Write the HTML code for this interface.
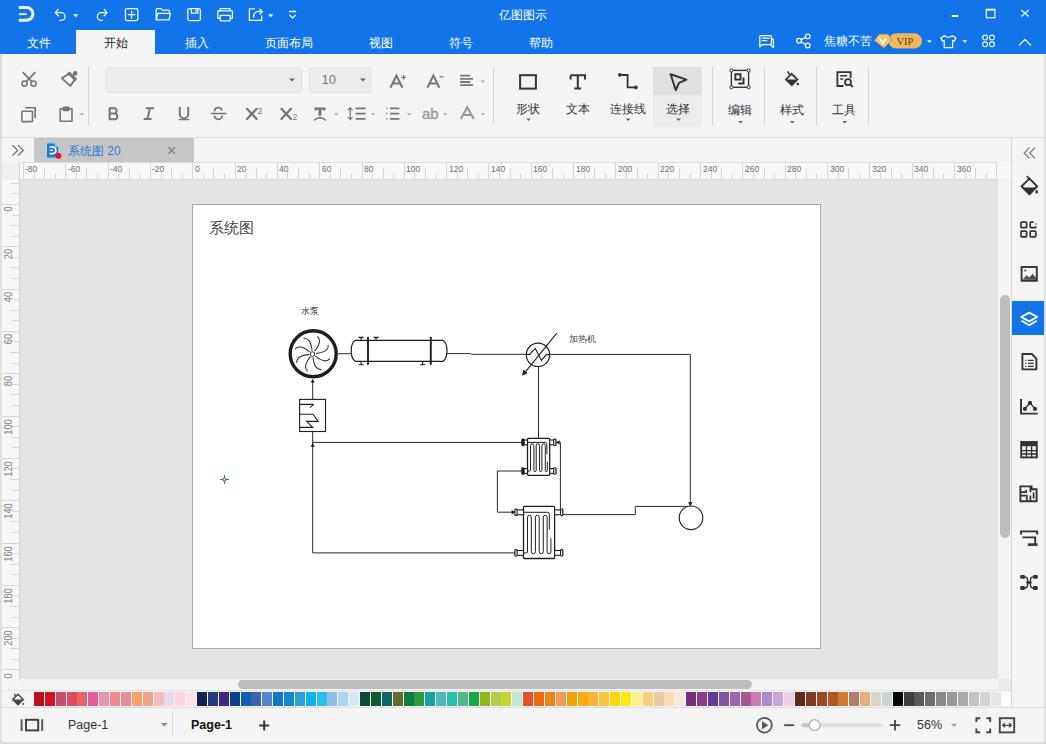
<!DOCTYPE html><html><head><meta charset="utf-8"><style>
*{margin:0;padding:0;box-sizing:border-box}
html,body{width:1046px;height:744px;overflow:hidden;background:#f4f4f4;font-family:"Liberation Sans",sans-serif;position:relative}
.a{position:absolute}
.t{position:absolute;white-space:nowrap;line-height:1;z-index:2}
svg.ov{position:absolute;left:0;top:0;overflow:visible}
</style></head><body>

<div class="a" style="left:0px;top:0px;width:1046px;height:54px;background:#1174e8;"></div>
<div class="a" style="left:76px;top:30px;width:79px;height:24px;background:#f4f4f4;"></div>
<div class="a" style="left:0px;top:54px;width:1046px;height:83px;background:#f4f4f4;"></div>
<div class="a" style="left:0px;top:137px;width:1046px;height:1px;background:#dadada;"></div>
<div class="a" style="left:0px;top:54px;width:2px;height:83px;background:#dedede;"></div>
<div class="a" style="left:0px;top:138px;width:1011px;height:24px;background:#f4f4f4;"></div>
<div class="a" style="left:34px;top:138px;width:160px;height:24px;background:#c6c6c6;"></div>
<div class="a" style="left:20px;top:180px;width:978px;height:499px;background:#e4e4e4;"></div>
<div class="a" style="left:192px;top:204px;width:629px;height:445px;background:#ffffff;border:1px solid #a9a9a9"></div>
<div class="a" style="left:0px;top:162px;width:1011px;height:18px;background:#f8f8f8;"></div>
<div class="a" style="left:0px;top:162px;width:20px;height:517px;background:#f7f7f7;"></div>
<div class="a" style="left:0px;top:162px;width:20px;height:18px;background:#efefef;"></div>
<div class="a" style="left:0px;top:180px;width:2px;height:499px;background:#e6e6e6;"></div>
<div class="a" style="left:20px;top:162px;width:978px;height:1px;background:#dcdcdc;"></div>
<div class="a" style="left:20px;top:179px;width:978px;height:1px;background:#dadada;"></div>
<div class="a" style="left:19px;top:162px;width:1px;height:517px;background:#d4d4d4;"></div>
<div class="a" style="left:998px;top:179px;width:13px;height:512px;background:#f3f3f3;"></div>
<div class="a" style="left:1000px;top:295px;width:10px;height:243px;background:#bdbdbd;border-radius:5px"></div>
<div class="a" style="left:20px;top:679px;width:978px;height:12px;background:#f3f3f3;"></div>
<div class="a" style="left:238px;top:680px;width:514px;height:9px;background:#bdbdbd;border-radius:4.5px"></div>
<div class="a" style="left:998px;top:679px;width:13px;height:12px;background:#ebebeb;"></div>
<div class="a" style="left:1011px;top:138px;width:1px;height:569px;background:#d6d6d6;"></div>
<div class="a" style="left:1012px;top:138px;width:34px;height:569px;background:#f4f4f4;"></div>
<div class="a" style="left:1012px;top:301px;width:32px;height:34px;background:#1174e8;"></div>
<div class="a" style="left:0px;top:691px;width:1011px;height:16px;background:#f4f4f4;"></div>
<div class="a" style="left:34.00px;top:692px;width:10px;height:14px;background:#b5121b"></div>
<div class="a" style="left:44.87px;top:692px;width:10px;height:14px;background:#d7111f"></div>
<div class="a" style="left:55.74px;top:692px;width:10px;height:14px;background:#c94d72"></div>
<div class="a" style="left:66.61px;top:692px;width:10px;height:14px;background:#e04a5f"></div>
<div class="a" style="left:77.48px;top:692px;width:10px;height:14px;background:#e8636a"></div>
<div class="a" style="left:88.35px;top:692px;width:10px;height:14px;background:#e45c9b"></div>
<div class="a" style="left:99.22px;top:692px;width:10px;height:14px;background:#e595b3"></div>
<div class="a" style="left:110.09px;top:692px;width:10px;height:14px;background:#ef8a8a"></div>
<div class="a" style="left:120.96px;top:692px;width:10px;height:14px;background:#e58f9c"></div>
<div class="a" style="left:131.83px;top:692px;width:10px;height:14px;background:#f7a26a"></div>
<div class="a" style="left:142.70px;top:692px;width:10px;height:14px;background:#f0a58a"></div>
<div class="a" style="left:153.57px;top:692px;width:10px;height:14px;background:#f5bcbc"></div>
<div class="a" style="left:164.44px;top:692px;width:10px;height:14px;background:#e7d8ea"></div>
<div class="a" style="left:175.31px;top:692px;width:10px;height:14px;background:#fbd5e2"></div>
<div class="a" style="left:186.18px;top:692px;width:10px;height:14px;background:#fce3e3"></div>
<div class="a" style="left:197.05px;top:692px;width:10px;height:14px;background:#13224e"></div>
<div class="a" style="left:207.92px;top:692px;width:10px;height:14px;background:#243c7a"></div>
<div class="a" style="left:218.79px;top:692px;width:10px;height:14px;background:#3d2a80"></div>
<div class="a" style="left:229.66px;top:692px;width:10px;height:14px;background:#0d3f8f"></div>
<div class="a" style="left:240.53px;top:692px;width:10px;height:14px;background:#0f62a8"></div>
<div class="a" style="left:251.40px;top:692px;width:10px;height:14px;background:#3b63ae"></div>
<div class="a" style="left:262.27px;top:692px;width:10px;height:14px;background:#5483c6"></div>
<div class="a" style="left:273.14px;top:692px;width:10px;height:14px;background:#0f79c8"></div>
<div class="a" style="left:284.01px;top:692px;width:10px;height:14px;background:#1388d0"></div>
<div class="a" style="left:294.88px;top:692px;width:10px;height:14px;background:#2ea1dc"></div>
<div class="a" style="left:305.75px;top:692px;width:10px;height:14px;background:#11b2ea"></div>
<div class="a" style="left:316.62px;top:692px;width:10px;height:14px;background:#2cbdf0"></div>
<div class="a" style="left:327.49px;top:692px;width:10px;height:14px;background:#8ec0e8"></div>
<div class="a" style="left:338.36px;top:692px;width:10px;height:14px;background:#a9d6ef"></div>
<div class="a" style="left:349.23px;top:692px;width:10px;height:14px;background:#d4e9f3"></div>
<div class="a" style="left:360.10px;top:692px;width:10px;height:14px;background:#0c4a35"></div>
<div class="a" style="left:370.97px;top:692px;width:10px;height:14px;background:#0c5c2f"></div>
<div class="a" style="left:381.84px;top:692px;width:10px;height:14px;background:#0f6466"></div>
<div class="a" style="left:392.71px;top:692px;width:10px;height:14px;background:#5f6e2b"></div>
<div class="a" style="left:403.58px;top:692px;width:10px;height:14px;background:#0f7b45"></div>
<div class="a" style="left:414.45px;top:692px;width:10px;height:14px;background:#2a9a3f"></div>
<div class="a" style="left:425.32px;top:692px;width:10px;height:14px;background:#13a59b"></div>
<div class="a" style="left:436.19px;top:692px;width:10px;height:14px;background:#4fb8bb"></div>
<div class="a" style="left:447.06px;top:692px;width:10px;height:14px;background:#26c2ae"></div>
<div class="a" style="left:457.93px;top:692px;width:10px;height:14px;background:#55b586"></div>
<div class="a" style="left:468.80px;top:692px;width:10px;height:14px;background:#14a94a"></div>
<div class="a" style="left:479.67px;top:692px;width:10px;height:14px;background:#8ab919"></div>
<div class="a" style="left:490.54px;top:692px;width:10px;height:14px;background:#b0cc53"></div>
<div class="a" style="left:501.41px;top:692px;width:10px;height:14px;background:#c8d531"></div>
<div class="a" style="left:512.28px;top:692px;width:10px;height:14px;background:#c3e6d4"></div>
<div class="a" style="left:523.15px;top:692px;width:10px;height:14px;background:#e4512a"></div>
<div class="a" style="left:534.02px;top:692px;width:10px;height:14px;background:#ec6b11"></div>
<div class="a" style="left:544.89px;top:692px;width:10px;height:14px;background:#f08413"></div>
<div class="a" style="left:555.76px;top:692px;width:10px;height:14px;background:#f3995a"></div>
<div class="a" style="left:566.63px;top:692px;width:10px;height:14px;background:#f0a30b"></div>
<div class="a" style="left:577.50px;top:692px;width:10px;height:14px;background:#f8ab10"></div>
<div class="a" style="left:588.37px;top:692px;width:10px;height:14px;background:#fbb33a"></div>
<div class="a" style="left:599.24px;top:692px;width:10px;height:14px;background:#fcc43e"></div>
<div class="a" style="left:610.11px;top:692px;width:10px;height:14px;background:#fdd60a"></div>
<div class="a" style="left:620.98px;top:692px;width:10px;height:14px;background:#fde80d"></div>
<div class="a" style="left:631.85px;top:692px;width:10px;height:14px;background:#fcf08a"></div>
<div class="a" style="left:642.72px;top:692px;width:10px;height:14px;background:#f9cf7a"></div>
<div class="a" style="left:653.59px;top:692px;width:10px;height:14px;background:#e8cba0"></div>
<div class="a" style="left:664.46px;top:692px;width:10px;height:14px;background:#fcdcb4"></div>
<div class="a" style="left:675.33px;top:692px;width:10px;height:14px;background:#f7e8da"></div>
<div class="a" style="left:686.20px;top:692px;width:10px;height:14px;background:#7b2e7e"></div>
<div class="a" style="left:697.07px;top:692px;width:10px;height:14px;background:#8b3a8e"></div>
<div class="a" style="left:707.94px;top:692px;width:10px;height:14px;background:#5e3d96"></div>
<div class="a" style="left:718.81px;top:692px;width:10px;height:14px;background:#7b56a8"></div>
<div class="a" style="left:729.68px;top:692px;width:10px;height:14px;background:#9b68ac"></div>
<div class="a" style="left:740.55px;top:692px;width:10px;height:14px;background:#a25a8e"></div>
<div class="a" style="left:751.42px;top:692px;width:10px;height:14px;background:#cf79b0"></div>
<div class="a" style="left:762.29px;top:692px;width:10px;height:14px;background:#a98ccf"></div>
<div class="a" style="left:773.16px;top:692px;width:10px;height:14px;background:#c6a7d6"></div>
<div class="a" style="left:784.03px;top:692px;width:10px;height:14px;background:#efd1e6"></div>
<div class="a" style="left:794.90px;top:692px;width:10px;height:14px;background:#5f2a1a"></div>
<div class="a" style="left:805.77px;top:692px;width:10px;height:14px;background:#7e3a26"></div>
<div class="a" style="left:816.64px;top:692px;width:10px;height:14px;background:#9a4a24"></div>
<div class="a" style="left:827.51px;top:692px;width:10px;height:14px;background:#b05a22"></div>
<div class="a" style="left:838.38px;top:692px;width:10px;height:14px;background:#cd7a34"></div>
<div class="a" style="left:849.25px;top:692px;width:10px;height:14px;background:#b08068"></div>
<div class="a" style="left:860.12px;top:692px;width:10px;height:14px;background:#e5b07a"></div>
<div class="a" style="left:870.99px;top:692px;width:10px;height:14px;background:#d8d3cf"></div>
<div class="a" style="left:881.86px;top:692px;width:10px;height:14px;background:#c9d3cf"></div>
<div class="a" style="left:892.73px;top:692px;width:10px;height:14px;background:#050505"></div>
<div class="a" style="left:903.60px;top:692px;width:10px;height:14px;background:#433d3d"></div>
<div class="a" style="left:914.47px;top:692px;width:10px;height:14px;background:#595959"></div>
<div class="a" style="left:925.34px;top:692px;width:10px;height:14px;background:#6e6e6e"></div>
<div class="a" style="left:936.21px;top:692px;width:10px;height:14px;background:#888888"></div>
<div class="a" style="left:947.08px;top:692px;width:10px;height:14px;background:#999999"></div>
<div class="a" style="left:957.95px;top:692px;width:10px;height:14px;background:#aaaaaa"></div>
<div class="a" style="left:968.82px;top:692px;width:10px;height:14px;background:#c4c4c4"></div>
<div class="a" style="left:979.69px;top:692px;width:10px;height:14px;background:#d4d4d4"></div>
<div class="a" style="left:990.56px;top:692px;width:10px;height:14px;background:#e6e6e6"></div>
<div class="a" style="left:1001.43px;top:692px;width:10px;height:14px;background:#ffffff"></div>
<div class="a" style="left:0px;top:707px;width:1046px;height:1px;background:#dcdcdc;"></div>
<div class="a" style="left:0px;top:708px;width:1046px;height:36px;background:#f4f4f4;"></div>
<div class="a" style="left:172px;top:712px;width:1px;height:24px;background:#d8d8d8;"></div>
<div class="a" style="left:1044px;top:54px;width:2px;height:690px;background:#e0e0e0;"></div>
<div class="a" style="left:0px;top:742px;width:1046px;height:2px;background:#dcdcdc;"></div>
<div class="a" style="left:0px;top:138px;width:2px;height:604px;background:#e2e2e2;"></div>
<div class="a" style="left:0px;top:690px;width:1011px;height:1px;background:#e6e6e6;"></div>
<div class="t" style="left:499px;top:9px;font-size:12px;color:#fff;">亿图图示</div>
<div class="t" style="left:-21.5px;top:36.5px;font-size:12px;color:#fff;width:120px;text-align:center;">文件</div>
<div class="t" style="left:55.5px;top:36.5px;font-size:12px;color:#222;width:120px;text-align:center;">开始</div>
<div class="t" style="left:136.5px;top:36.5px;font-size:12px;color:#fff;width:120px;text-align:center;">插入</div>
<div class="t" style="left:228.5px;top:36.5px;font-size:12px;color:#fff;width:120px;text-align:center;">页面布局</div>
<div class="t" style="left:320.5px;top:36.5px;font-size:12px;color:#fff;width:120px;text-align:center;">视图</div>
<div class="t" style="left:400.5px;top:36.5px;font-size:12px;color:#fff;width:120px;text-align:center;">符号</div>
<div class="t" style="left:480.5px;top:36.5px;font-size:12px;color:#fff;width:120px;text-align:center;">帮助</div>
<div class="t" style="left:824px;top:35px;font-size:12px;color:#fff;">焦糖不苦</div>
<div class="t" style="left:488px;top:103px;font-size:12px;color:#333;width:80px;text-align:center;">形状</div>
<div class="t" style="left:538px;top:103px;font-size:12px;color:#333;width:80px;text-align:center;">文本</div>
<div class="t" style="left:588px;top:103px;font-size:12px;color:#333;width:80px;text-align:center;">连接线</div>
<div class="t" style="left:638px;top:103px;font-size:12px;color:#333;width:80px;text-align:center;">选择</div>
<div class="t" style="left:700px;top:104px;font-size:12px;color:#333;width:80px;text-align:center;">编辑</div>
<div class="t" style="left:752px;top:104px;font-size:12px;color:#333;width:80px;text-align:center;">样式</div>
<div class="t" style="left:804px;top:104px;font-size:12px;color:#333;width:80px;text-align:center;">工具</div>
<div class="t" style="left:321.5px;top:73px;font-size:13px;color:#777;">10</div>
<div class="t" style="left:68px;top:145px;font-size:12px;color:#2b7bd6;">系统图 20</div>
<div class="t" style="left:209px;top:220.5px;font-size:14.5px;color:#444;">系统图</div>
<div class="t" style="left:300.5px;top:306.5px;font-size:8.5px;color:#333;">水泵</div>
<div class="t" style="left:569.3px;top:334.5px;font-size:9px;color:#444;">加热机</div>
<div class="t" style="left:68px;top:719px;font-size:12.5px;color:#333;">Page-1</div>
<div class="t" style="left:191px;top:719px;font-size:12.5px;color:#111;font-weight:bold">Page-1</div>
<div class="t" style="left:917px;top:719px;font-size:12.5px;color:#333;">56%</div>
<div class="t" style="left:25.4px;top:164.2px;font-size:9.5px;color:#6e6e6e;transform:scaleX(0.9);transform-origin:0 0">-80</div>
<div class="t" style="left:67.7px;top:164.2px;font-size:9.5px;color:#6e6e6e;transform:scaleX(0.9);transform-origin:0 0">-60</div>
<div class="t" style="left:110.1px;top:164.2px;font-size:9.5px;color:#6e6e6e;transform:scaleX(0.9);transform-origin:0 0">-40</div>
<div class="t" style="left:152.4px;top:164.2px;font-size:9.5px;color:#6e6e6e;transform:scaleX(0.9);transform-origin:0 0">-20</div>
<div class="t" style="left:194.7px;top:164.2px;font-size:9.5px;color:#6e6e6e;transform:scaleX(0.9);transform-origin:0 0">0</div>
<div class="t" style="left:237.0px;top:164.2px;font-size:9.5px;color:#6e6e6e;transform:scaleX(0.9);transform-origin:0 0">20</div>
<div class="t" style="left:279.3px;top:164.2px;font-size:9.5px;color:#6e6e6e;transform:scaleX(0.9);transform-origin:0 0">40</div>
<div class="t" style="left:321.7px;top:164.2px;font-size:9.5px;color:#6e6e6e;transform:scaleX(0.9);transform-origin:0 0">60</div>
<div class="t" style="left:364.0px;top:164.2px;font-size:9.5px;color:#6e6e6e;transform:scaleX(0.9);transform-origin:0 0">80</div>
<div class="t" style="left:406.3px;top:164.2px;font-size:9.5px;color:#6e6e6e;transform:scaleX(0.9);transform-origin:0 0">100</div>
<div class="t" style="left:448.6px;top:164.2px;font-size:9.5px;color:#6e6e6e;transform:scaleX(0.9);transform-origin:0 0">120</div>
<div class="t" style="left:490.9px;top:164.2px;font-size:9.5px;color:#6e6e6e;transform:scaleX(0.9);transform-origin:0 0">140</div>
<div class="t" style="left:533.3px;top:164.2px;font-size:9.5px;color:#6e6e6e;transform:scaleX(0.9);transform-origin:0 0">160</div>
<div class="t" style="left:575.6px;top:164.2px;font-size:9.5px;color:#6e6e6e;transform:scaleX(0.9);transform-origin:0 0">180</div>
<div class="t" style="left:617.9px;top:164.2px;font-size:9.5px;color:#6e6e6e;transform:scaleX(0.9);transform-origin:0 0">200</div>
<div class="t" style="left:660.2px;top:164.2px;font-size:9.5px;color:#6e6e6e;transform:scaleX(0.9);transform-origin:0 0">220</div>
<div class="t" style="left:702.5px;top:164.2px;font-size:9.5px;color:#6e6e6e;transform:scaleX(0.9);transform-origin:0 0">240</div>
<div class="t" style="left:744.9px;top:164.2px;font-size:9.5px;color:#6e6e6e;transform:scaleX(0.9);transform-origin:0 0">260</div>
<div class="t" style="left:787.2px;top:164.2px;font-size:9.5px;color:#6e6e6e;transform:scaleX(0.9);transform-origin:0 0">280</div>
<div class="t" style="left:829.5px;top:164.2px;font-size:9.5px;color:#6e6e6e;transform:scaleX(0.9);transform-origin:0 0">300</div>
<div class="t" style="left:871.8px;top:164.2px;font-size:9.5px;color:#6e6e6e;transform:scaleX(0.9);transform-origin:0 0">320</div>
<div class="t" style="left:914.1px;top:164.2px;font-size:9.5px;color:#6e6e6e;transform:scaleX(0.9);transform-origin:0 0">340</div>
<div class="t" style="left:956.5px;top:164.2px;font-size:9.5px;color:#6e6e6e;transform:scaleX(0.9);transform-origin:0 0">360</div>
<div class="a" style="left:0;top:179px;width:19px;height:500px;overflow:hidden;z-index:2">
<div class="t" style="left:4.4px;top:27.0px;font-size:10px;color:#808080;transform-origin:0 0;transform:rotate(-90deg) translate(-100%,0) scaleX(0.92)">0</div>
<div class="t" style="left:4.4px;top:69.3px;font-size:10px;color:#808080;transform-origin:0 0;transform:rotate(-90deg) translate(-100%,0) scaleX(0.92)">20</div>
<div class="t" style="left:4.4px;top:111.6px;font-size:10px;color:#808080;transform-origin:0 0;transform:rotate(-90deg) translate(-100%,0) scaleX(0.92)">40</div>
<div class="t" style="left:4.4px;top:154.0px;font-size:10px;color:#808080;transform-origin:0 0;transform:rotate(-90deg) translate(-100%,0) scaleX(0.92)">60</div>
<div class="t" style="left:4.4px;top:196.3px;font-size:10px;color:#808080;transform-origin:0 0;transform:rotate(-90deg) translate(-100%,0) scaleX(0.92)">80</div>
<div class="t" style="left:4.4px;top:238.6px;font-size:10px;color:#808080;transform-origin:0 0;transform:rotate(-90deg) translate(-100%,0) scaleX(0.92)">100</div>
<div class="t" style="left:4.4px;top:280.9px;font-size:10px;color:#808080;transform-origin:0 0;transform:rotate(-90deg) translate(-100%,0) scaleX(0.92)">120</div>
<div class="t" style="left:4.4px;top:323.2px;font-size:10px;color:#808080;transform-origin:0 0;transform:rotate(-90deg) translate(-100%,0) scaleX(0.92)">140</div>
<div class="t" style="left:4.4px;top:365.6px;font-size:10px;color:#808080;transform-origin:0 0;transform:rotate(-90deg) translate(-100%,0) scaleX(0.92)">160</div>
<div class="t" style="left:4.4px;top:407.9px;font-size:10px;color:#808080;transform-origin:0 0;transform:rotate(-90deg) translate(-100%,0) scaleX(0.92)">180</div>
<div class="t" style="left:4.4px;top:450.2px;font-size:10px;color:#808080;transform-origin:0 0;transform:rotate(-90deg) translate(-100%,0) scaleX(0.92)">200</div>
<div class="t" style="left:4.4px;top:492.5px;font-size:10px;color:#808080;transform-origin:0 0;transform:rotate(-90deg) translate(-100%,0) scaleX(0.92)">220</div>
</div>
<svg class="ov" width="1046" height="744" viewBox="0 0 1046 744"><path d="M23.4 163V179M34.0 172.5V179M44.6 168V179M55.2 172.5V179M65.7 163V179M76.3 172.5V179M86.9 168V179M97.5 172.5V179M108.1 163V179M118.6 172.5V179M129.2 168V179M139.8 172.5V179M150.4 163V179M161.0 172.5V179M171.5 168V179M182.1 172.5V179M192.7 163V179M203.3 172.5V179M213.9 168V179M224.4 172.5V179M235.0 163V179M245.6 172.5V179M256.2 168V179M266.8 172.5V179M277.3 163V179M287.9 172.5V179M298.5 168V179M309.1 172.5V179M319.7 163V179M330.2 172.5V179M340.8 168V179M351.4 172.5V179M362.0 163V179M372.6 172.5V179M383.1 168V179M393.7 172.5V179M404.3 163V179M414.9 172.5V179M425.5 168V179M436.0 172.5V179M446.6 163V179M457.2 172.5V179M467.8 168V179M478.4 172.5V179M488.9 163V179M499.5 172.5V179M510.1 168V179M520.7 172.5V179M531.3 163V179M541.8 172.5V179M552.4 168V179M563.0 172.5V179M573.6 163V179M584.2 172.5V179M594.7 168V179M605.3 172.5V179M615.9 163V179M626.5 172.5V179M637.1 168V179M647.6 172.5V179M658.2 163V179M668.8 172.5V179M679.4 168V179M690.0 172.5V179M700.5 163V179M711.1 172.5V179M721.7 168V179M732.3 172.5V179M742.9 163V179M753.4 172.5V179M764.0 168V179M774.6 172.5V179M785.2 163V179M795.8 172.5V179M806.3 168V179M816.9 172.5V179M827.5 163V179M838.1 172.5V179M848.7 168V179M859.2 172.5V179M869.8 163V179M880.4 172.5V179M891.0 168V179M901.6 172.5V179M912.1 163V179M922.7 172.5V179M933.3 168V179M943.9 172.5V179M954.5 163V179M965.0 172.5V179M975.6 168V179M986.2 172.5V179M996.8 163V179" stroke="#d6d6d6" stroke-width="1" fill="none" shape-rendering="crispEdges"/><path d="M10 183.2H19M12 193.8H19M2 204.4H19M12 215.0H19M10 225.6H19M12 236.1H19M2 246.7H19M12 257.3H19M10 267.9H19M12 278.5H19M2 289.0H19M12 299.6H19M10 310.2H19M12 320.8H19M2 331.4H19M12 341.9H19M10 352.5H19M12 363.1H19M2 373.7H19M12 384.3H19M10 394.8H19M12 405.4H19M2 416.0H19M12 426.6H19M10 437.2H19M12 447.7H19M2 458.3H19M12 468.9H19M10 479.5H19M12 490.1H19M2 500.6H19M12 511.2H19M10 521.8H19M12 532.4H19M2 543.0H19M12 553.5H19M10 564.1H19M12 574.7H19M2 585.3H19M12 595.9H19M10 606.4H19M12 617.0H19M2 627.6H19M12 638.2H19M10 648.8H19M12 659.3H19M2 669.9H19" stroke="#d6d6d6" stroke-width="1" fill="none" shape-rendering="crispEdges"/><g fill="none" stroke="#f2f7ff" stroke-width="3"><path d="M18.8 7.4H26.5A6.4 6.4 0 0 1 26.5 20.2H18.8"/></g><path d="M18.9 14.1H26.8" stroke="#f2f7ff" stroke-width="2.1" opacity="0.85"/><g fill="none" stroke="#f2f7ff" stroke-width="1.3" stroke-linecap="round" stroke-linejoin="round"><path d="M58.2 9.4L55.4 12.6L58.2 15.8"/><path d="M55.6 12.6H61.2A3.9 3.9 0 0 1 61.2 20.4H59.8"/><path d="M104.2 9.4L107 12.6L104.2 15.8"/><path d="M106.8 12.6H101.2A3.9 3.9 0 0 0 101.2 20.4H102.6" transform="translate(0,0)"/><rect x="125.4" y="8.6" width="12.4" height="12" rx="1.5"/><path d="M131.6 11.3V17.9M128.3 14.6H134.9"/><path d="M156.2 19.8V9.6A1 1 0 0 1 157.2 8.6H161L162.6 10.2H168.4A1 1 0 0 1 169.4 11.2V13"/><path d="M156.2 19.8L157.8 13.4H170.4L169 19.8Z"/><rect x="187.8" y="8.6" width="12.6" height="12" rx="1.5"/><path d="M191.4 8.8V13.2H197.8V8.8"/><path d="M195.9 10V11.6"/><path d="M220 10.9V8.6H230.2V10.9"/><path d="M219.6 18.4H217.8V11.6A0.8 0.8 0 0 1 218.6 10.8H231.6A0.8 0.8 0 0 1 232.4 11.6V18.4H230.6"/><rect x="220.2" y="15.4" width="10" height="5.4" rx="0.5"/><path d="M254.6 8.8H249.4V20.4H261.6V15.8"/><path d="M253.6 17.2A5 5 0 0 1 259.6 11.6H262.2"/><path d="M259.8 9.2L262.4 11.6L259.8 14"/><path d="M289.6 11.5H295.6M289.8 15.2L292.6 18L295.4 15.2"/></g><rect x="986.3" y="9.3" width="8.6" height="8.4" fill="none" stroke="#f2f7ff" stroke-width="1.2"/><rect x="986" y="9" width="9.2" height="1.6" fill="#f2f7ff"/><rect x="951.7" y="15" width="6.6" height="2" fill="#f2f7ff"/><path d="M1021.3 10.1L1028.8 16.6M1028.8 10.1L1021.3 16.6" stroke="#f2f7ff" stroke-width="1.3"/><path d="M73 14.2H78.4L75.7 17.2Z M268 14.2H273.4L270.7 17.2Z" fill="#f2f7ff"/><g fill="none" stroke="#f2f7ff" stroke-width="1.3" stroke-linecap="round" stroke-linejoin="round"><path d="M760.4 35.6H770.4A1 1 0 0 1 771.4 36.6V43.6A1 1 0 0 1 770.4 44.6H762.6L759.8 46.8V36.4A0.8 0.8 0 0 1 760.4 35.6Z"/><path d="M771.6 38.8H772.6A0.8 0.8 0 0 1 773.4 39.6V47.4L771 45.4"/><path d="M762.2 38.2H769.2M762.2 40.6H766.8"/><circle cx="807.7" cy="36.4" r="2.3"/><circle cx="807.7" cy="45.5" r="2.3"/><circle cx="799" cy="40.8" r="2.4"/><path d="M801.1 39.6L805.6 37.4M801.1 42L805.6 44.4"/><path d="M944.4 35.6L940.8 38.2L942.6 41.2L944.2 40.4V47.6H952.6V40.4L954.2 41.2L956 38.2L952.4 35.6C951.2 37.6 945.6 37.6 944.4 35.6Z"/><circle cx="985.1" cy="37.5" r="2.45" stroke-width="1.15"/><circle cx="991.9" cy="37.5" r="2.45" stroke-width="1.15"/><circle cx="985.1" cy="44.3" r="2.45" stroke-width="1.15"/><circle cx="991.9" cy="44.3" r="2.45" stroke-width="1.15"/><path d="M1019.4 45L1025 39.4L1030.6 45"/></g><path d="M927 40.2H931.8L929.4 43Z M962.4 40.2H967.2L964.8 43Z" fill="#f2f7ff"/><rect x="888.6" y="33.2" width="33.4" height="15.4" rx="7.7" fill="#efb75f"/><path d="M874.2 40.6L879.4 34H888L892 40L884 48.2Z" fill="#f2c566" stroke="#8a6fb0" stroke-width="0.7"/><path d="M879.6 38.6L882.8 43.2L886 38.6" fill="none" stroke="#fff" stroke-width="1.7"/><text x="896.4" y="44.6" font-size="10.5" fill="#6a3f0c" font-family="Liberation Serif">VIP</text><g fill="none" stroke="#757575" stroke-width="1.6" stroke-linecap="round" stroke-linejoin="round"><circle cx="24.6" cy="83.6" r="2.6"/><circle cx="33.6" cy="83.6" r="2.6"/><path d="M23.2 72.6L31.6 81.4M35 72.6L26.6 81.4"/><path d="M61.9 78.3L69.2 73.4L75.2 79.2L70.3 85.9Z" stroke-width="1.8"/><path d="M69.2 73.4L75.2 79.2" stroke-width="3.2"/><circle cx="75.2" cy="73.2" r="1.4" fill="#757575"/><path d="M72.2 76.3L75 73.5" stroke-width="2.2"/><rect x="21.9" y="111.2" width="10.6" height="10.4" rx="0.6"/><path d="M25.8 107.8H35.2V117.6"/><path d="M62.2 108.8H60.2V121.2H72V108.8H70"/><rect x="63.2" y="107.2" width="5.8" height="3.2" rx="0.8" fill="#757575"/></g><path d="M79.6 113.2H84.2L81.9 115.8Z" fill="#aaaaaa"/><path d="M88.5 67V125" stroke="#d4d4d4" stroke-width="1"/><path d="M493.5 67V124" stroke="#d4d4d4" stroke-width="1"/><path d="M712.5 67V125" stroke="#d4d4d4" stroke-width="1"/><path d="M764.5 67V125" stroke="#d4d4d4" stroke-width="1"/><path d="M816.5 67V125" stroke="#d4d4d4" stroke-width="1"/><path d="M868.5 67V125" stroke="#d4d4d4" stroke-width="1"/><rect x="106" y="68" width="195.5" height="24.5" rx="2.5" fill="#ececec" stroke="#e0e0e0" stroke-width="1"/><rect x="309.5" y="68" width="61.5" height="24.5" rx="2.5" fill="#ececec" stroke="#e0e0e0" stroke-width="1"/><path d="M289.2 78.4H295L292.1 81.6Z M360 78.4H365.8L362.9 81.6Z" fill="#666"/><g fill="none" stroke="#757575" stroke-width="2" stroke-linecap="round" stroke-linejoin="round"><path d="M109.6 108.2H114.6A2.8 2.8 0 0 1 114.6 113.6H109.6V108.2M109.6 113.6H115.2A2.9 2.9 0 0 1 115.2 119.2H109.6Z"/><path d="M146.6 108.2H153.2M144.4 119H150.8M150 108.2L147.4 119"/><path d="M179.8 107.8V114.2A4.2 4.2 0 0 0 188.2 114.2V107.8"/><path d="M179.2 119.6H188.8" stroke-width="1.3"/><path d="M214.6 111.4A3.75 3.6 0 0 1 222 110.4M214.4 115.6A3.9 3.7 0 0 0 222.2 115.6" stroke-width="1.8" stroke-linecap="butt"/><path d="M211.2 113.5H226" stroke-width="1.3"/><path d="M247 108.8L256.6 119M256.6 108.8L247 119" stroke-width="2.2"/><path d="M281.4 108.8L291 119M291 108.8L281.4 119" stroke-width="2.2"/></g><text x="257.8" y="114.4" font-size="8.5" fill="#757575" font-family="Liberation Sans">2</text><text x="292.4" y="120" font-size="8.5" fill="#757575" font-family="Liberation Sans">2</text><g fill="none" stroke="#757575" stroke-width="1.5" stroke-linecap="round"><path d="M315.6 110.4V108.6H324.4V110.4" stroke-width="2.2" stroke-linecap="butt"/><path d="M319.9 108.4V115.6" stroke-width="3" stroke-linecap="butt"/><path d="M314.4 120Q320 115.4 325.4 120" stroke-width="1.6"/><path d="M350.2 107.8V119.4M348.2 109.8L350.2 107.6L352.2 109.8M348.2 117.4L350.2 119.6L352.2 117.4" stroke-width="1.2"/><path d="M355.6 108.4H365.6M355.6 113.6H365.6M355.6 118.8H365.6" stroke-width="1.8" stroke-linecap="butt"/><path d="M386.4 108.4H387.4M386.4 113.6H387.4M386.4 118.8H387.4" stroke-width="1.8" stroke-linecap="butt"/><path d="M390 108.4H399.4M390 113.6H399.4M390 118.8H399.4" stroke-width="1.8" stroke-linecap="butt"/></g><text x="422" y="118.8" font-size="15" fill="#999" stroke="#999" stroke-width="0.3" font-family="Liberation Sans">ab</text><path d="M460.8 119L467.3 107.2L473.8 119M462.9 115H471.7" fill="none" stroke="#999" stroke-width="2.1"/><path d="M334 113.2H338.4L336.2 115.6Z" fill="#aaaaaa"/><path d="M370.8 113.2H375.2L373.0 115.6Z" fill="#aaaaaa"/><path d="M406.8 113.2H411.2L409.0 115.6Z" fill="#aaaaaa"/><path d="M443 113.2H447.4L445.2 115.6Z" fill="#aaaaaa"/><path d="M480.8 113.2H485.2L483.0 115.6Z" fill="#aaaaaa"/><path d="M480.6 80.6H485L482.8 83Z" fill="#aaaaaa"/><g fill="none" stroke="#757575" stroke-width="2"><path d="M390.4 87.8L396.4 75.6L402.4 87.8M392.6 83.4H400.2"/><path d="M403.6 75V79.6M401.3 77.3H405.9" stroke-width="1.3"/><path d="M427.4 87.8L433.4 75.6L439.4 87.8M429.6 83.4H437.2"/><path d="M439.6 76.8H443.4" stroke-width="1.3"/><path d="M460.2 75.6H470.2M460.2 78.8H473M460.2 82H470.2M460.2 85.2H473" stroke-width="1.8"/></g><rect x="653" y="67" width="49" height="28.5" fill="#e0e0e0"/><rect x="653" y="95.5" width="49" height="32" fill="#ececec"/><g fill="none" stroke="#333333" stroke-width="2" stroke-linejoin="miter"><rect x="520.1" y="75.2" width="15.8" height="13.4"/></g><path d="M570.6 75.2H585V79.4M570.6 75.2V79.4M577.8 75.2V88.6M574.4 88.6H581.2" fill="none" stroke="#333333" stroke-width="2"/><circle cx="619.9" cy="74.8" r="1.9" fill="#333333"/><circle cx="635.8" cy="87.4" r="1.9" fill="#333333"/><path d="M621.5 75H627.6V87.4H634" fill="none" stroke="#333333" stroke-width="1.8"/><path d="M670.6 74.2L686.4 79.6L679 82.8L675.8 90.2Z" fill="none" stroke="#333333" stroke-width="2" stroke-linejoin="round"/><g fill="none" stroke="#333333"><rect x="731.4" y="70.4" width="17.2" height="16.9" stroke-width="1.4"/><path d="M735.3 74.2H740.5V79.6H735.3Z" stroke-width="1.9"/><path d="M743.5 77.4V83.4H738.2" stroke-width="2"/></g><circle cx="731.4" cy="70.4" r="1.6" fill="#f4f4f4" stroke="#333333" stroke-width="1"/><circle cx="748.6" cy="70.4" r="1.6" fill="#f4f4f4" stroke="#333333" stroke-width="1"/><circle cx="731.4" cy="87.3" r="1.6" fill="#f4f4f4" stroke="#333333" stroke-width="1"/><circle cx="748.6" cy="87.3" r="1.6" fill="#f4f4f4" stroke="#333333" stroke-width="1"/><path d="M786 79.4L791.6 73.8L797.4 79.6L791.8 85.2Z" fill="none" stroke="#333333" stroke-width="1.7"/><path d="M786.2 79.6H797.2L791.8 85.2Z" fill="#333333"/><path d="M789.6 74.6L787.6 71.4" stroke="#333333" stroke-width="1.6"/><circle cx="797.8" cy="84" r="1.3" fill="#333333"/><path d="M850.6 78V72.2H837.4V86H843.6" fill="none" stroke="#333333" stroke-width="1.8"/><path d="M840.2 75.8H847.2M840.2 79H843.2" stroke="#333333" stroke-width="1.4"/><circle cx="848" cy="82.2" r="3" fill="none" stroke="#333333" stroke-width="1.7"/><path d="M850.2 84.4L852.8 87" stroke="#333333" stroke-width="1.8"/><path d="M526.1 118.5H530.9L528.5 121.1Z" fill="#666"/><path d="M625.7 118.5H630.5L628.1 121.1Z" fill="#666"/><path d="M676.1 118.5H680.9L678.5 121.1Z" fill="#666"/><path d="M738.1 121H742.9L740.5 123.6Z" fill="#666"/><path d="M789.9 121H794.6999999999999L792.3 123.6Z" fill="#666"/><path d="M842.3000000000001 121H847.1L844.7 123.6Z" fill="#666"/><path d="M12.4 145.2L17.6 150.4L12.4 155.6M18 145.2L23.2 150.4L18 155.6" fill="none" stroke="#666" stroke-width="1.2"/><path d="M47 143.6H54.6L58.2 147.2V157.4H47Z" fill="#1f7ae0"/><path d="M54.6 143.6V147.2H58.2Z" fill="#8cc0f5"/><path d="M49.6 147H52.6A3.2 3.2 0 0 1 52.6 153.6H49.6" fill="none" stroke="#fff" stroke-width="1.6"/><path d="M49.8 150.3H53" stroke="#fff" stroke-width="1.3"/><circle cx="58.6" cy="155.8" r="2.9" fill="#e8141c"/><path d="M168.4 147.2L175 153.8M175 147.2L168.4 153.8" stroke="#777" stroke-width="1.2"/><path d="M1029.4 147.6L1024.2 153L1029.4 158.4M1035 147.6L1029.8 153L1035 158.4" fill="none" stroke="#777" stroke-width="1.2"/><path d="M1021.6 186.4L1029.4 178.6L1037.2 186.4L1029.4 194.2Z" fill="none" stroke="#333333" stroke-width="2" stroke-linejoin="round"/><path d="M1022.6 187.6H1036L1029.4 194.2Z" fill="#333333"/><path d="M1030.2 179.4L1026.8 176.2" stroke="#333333" stroke-width="1.8"/><path d="M1036.7 189.6C1035.6 191.2 1035.2 192 1035.4 192.6C1035.6 193.4 1036.2 193.6 1036.7 193.6C1037.2 193.6 1037.8 193.4 1038 192.6C1038.2 192 1037.8 191.2 1036.7 189.6Z" fill="#333333"/><g fill="none" stroke="#333333" stroke-width="1.7"><rect x="1021" y="222.1" width="5.6" height="5.6" rx="0.8"/><rect x="1021" y="231.2" width="5.6" height="5.6" rx="0.8"/><rect x="1030.2" y="231.2" width="5.6" height="5.6" rx="0.8"/><path d="M1033.6 222.1H1031A0.8 0.8 0 0 0 1030.2 222.9V226.9A0.8 0.8 0 0 0 1031 227.7H1035A0.8 0.8 0 0 0 1035.8 226.9V226.2M1035.8 224.6V223.6M1035.8 222.1V222.1"/></g><rect x="1021.6" y="267" width="15.2" height="13.8" fill="none" stroke="#333333" stroke-width="1.9"/><path d="M1022.6 279.8L1026.6 275.2L1029.4 277.6L1032.6 273.8L1036 278V279.8Z" fill="#333333" opacity="0.85"/><circle cx="1025.2" cy="270.6" r="1" fill="#333333"/><path d="M1029.2 312.6L1037.2 317L1029.2 321.4L1021.2 317Z" fill="none" stroke="#ffffff" stroke-width="1.8" stroke-linejoin="round"/><path d="M1021.6 320.8L1029.2 325.2L1036.8 320.8" fill="none" stroke="#ffffff" stroke-width="1.8" stroke-linejoin="round"/><path d="M1022.4 354H1031.8L1036.4 358.6V369.4H1022.4Z" fill="none" stroke="#333333" stroke-width="1.9" stroke-linejoin="round"/><path d="M1025.2 360.4H1026.4M1025.2 363.4H1026.4M1025.2 366.4H1026.4M1028 360.4H1033.6M1028 363.4H1033.6M1028 366.4H1033.6" stroke="#333333" stroke-width="1.4"/><path d="M1021 399V413.6H1037.6" fill="none" stroke="#333333" stroke-width="1.9"/><path d="M1024.9 408.9L1030 402.9L1035 408.9" fill="none" stroke="#333333" stroke-width="1.4"/><circle cx="1024.9" cy="408.9" r="2.1" fill="#333333"/><circle cx="1030" cy="402.9" r="2.1" fill="#333333"/><circle cx="1035" cy="408.9" r="2.1" fill="#333333"/><rect x="1021.2" y="442" width="15.6" height="15.4" fill="none" stroke="#333333" stroke-width="1.9"/><rect x="1021.2" y="442" width="15.6" height="4.2" fill="#333333"/><path d="M1021.2 450.6H1036.8M1021.2 454H1036.8M1026.4 446V457.4M1031.6 446V457.4" stroke="#333333" stroke-width="1.4"/><path d="M1020.4 486.4H1031.6V489.2H1036.6V501.2H1020.4Z" fill="none" stroke="#333333" stroke-width="1.9"/><path d="M1020.4 492.2H1026.2V490M1020.4 495.6H1026.8V501.2M1030.4 486.4V492.2M1030.4 495.4V501.2M1033.6 492.4V498.6" fill="none" stroke="#333333" stroke-width="1.7"/><path d="M1021 534.4V531.4H1037.2V534.4" fill="none" stroke="#333333" stroke-width="1.9"/><path d="M1022.4 537.4H1035.2V544" fill="none" stroke="#333333" stroke-width="1.9"/><path d="M1027.8 544.6H1037.6" stroke="#333333" stroke-width="2.6"/><g fill="#333333"><rect x="1020.2" y="575" width="4.8" height="3.8" rx="1.2"/><rect x="1033" y="575" width="4.8" height="3.8" rx="1.2"/><rect x="1020.2" y="586.1" width="4.8" height="3.8" rx="1.2"/><rect x="1033" y="586.1" width="4.8" height="3.8" rx="1.2"/><rect x="1026.3" y="581.2" width="5.4" height="2.6" rx="1.3"/></g><path d="M1024.6 576.9Q1027.6 576.9 1027.6 580V585Q1027.6 588 1024.6 588M1033.4 576.9Q1030.4 576.9 1030.4 580V585Q1030.4 588 1033.4 588" fill="none" stroke="#333333" stroke-width="1.3"/><path d="M12.8 699.4L18 694.2L23.2 699.4L18 704.6Z" fill="none" stroke="#444" stroke-width="1.5"/><path d="M12.8 699.6H23.2L18 704.6Z" fill="#444"/><path d="M15.6 696.6L14.4 693.4" stroke="#444" stroke-width="1.3"/><circle cx="23.2" cy="704" r="1" fill="#444"/><path d="M21.6 719.2V731M42.2 719.2V731" stroke="#555" stroke-width="1.9"/><rect x="26" y="719.8" width="12.2" height="10.6" fill="none" stroke="#444" stroke-width="2"/><path d="M161 723H167.6L164.3 726.4Z" fill="#888"/><path d="M259.2 725.4H269.2M264.2 720.4V730.4" stroke="#333" stroke-width="2"/><circle cx="764.4" cy="725.2" r="7.4" fill="none" stroke="#555" stroke-width="1.8"/><path d="M762 721.2V729.2L768.4 725.2Z" fill="#555"/><path d="M784.2 725.2H794.2" stroke="#444" stroke-width="1.8"/><path d="M889.8 725.2H900.2M895 720V730.4" stroke="#444" stroke-width="1.8"/><rect x="801.4" y="723.2" width="80.6" height="4" rx="2" fill="#dedede"/><rect x="801.4" y="723.2" width="13" height="4" rx="2" fill="#c8c8c8"/><circle cx="814.6" cy="725.2" r="5.4" fill="#fff" stroke="#b4b4b4" stroke-width="1.4"/><path d="M951.2 723.8H957.2L954.2 726.8Z" fill="#999"/><path d="M976.4 722V718.2H980.2M986.4 718.2H990.2V722M990.2 728.4V732.2H986.4M980.2 732.2H976.4V728.4" fill="none" stroke="#444" stroke-width="1.9"/><rect x="999.8" y="718.2" width="14.4" height="14.2" fill="none" stroke="#444" stroke-width="1.9"/><path d="M1003 725.3H1011M1005 723.2L1002.8 725.3L1005 727.4M1009 723.2L1011.2 725.3L1009 727.4" fill="none" stroke="#444" stroke-width="1.3"/><g fill="none" stroke="#2a2a2a" stroke-width="1"><path d="M338 353.7H351.2"/><path d="M447 353.6H470.8L471.6 354.3H526.4"/><path d="M549.7 354.4H690.3V504"/><path d="M538.5 367V438.4"/><path d="M522.3 442.4H312.7V552.9H515.3"/><path d="M312.7 431.5V444"/><path d="M312.7 399.4V380"/><path d="M522.3 471H497.4V512.2H514"/><path d="M562.6 514.6H635.3V506.4H690.3"/><path d="M560.4 514.2V442.4H557"/></g><path d="M690.3 506.2L688 502.2H692.6Z M515.6 512.2L511.6 510L511.6 514.4Z M555.8 442.4L559.6 440.2V444.6Z M312.7 379L310.6 382.6H314.8Z M312.7 443.2L310.6 446.8H314.8Z" fill="#1e1e1e"/><circle cx="313.2" cy="353.7" r="23" fill="#fff" stroke="#1e1e1e" stroke-width="3.4"/><circle cx="312.4" cy="354.1" r="2.3" fill="#fff" stroke="#1e1e1e" stroke-width="0.9"/><path d="M314.55 351.18Q322.83 340.91 317.18 336.42M315.87 353.43Q328.99 352.02 328.18 344.85M315.22 355.95Q325.49 364.23 329.98 358.58M312.97 357.27Q314.38 370.39 321.55 369.58M310.45 356.62Q302.17 366.89 307.82 371.38M309.13 354.37Q296.01 355.78 296.82 362.95M309.78 351.85Q299.51 343.57 295.02 349.22M312.03 350.53Q310.62 337.41 303.45 338.22" fill="none" stroke="#333" stroke-width="1.05"/><rect x="299.6" y="399.4" width="25.9" height="32.1" fill="#fff" stroke="#1e1e1e" stroke-width="1.1"/><path d="M299.6 404.4H313.6M310 407.6L313.8 404.4M299.6 414.3H313L318.2 421.4H306.6L312.7 427.4H299.6" fill="none" stroke="#1e1e1e" stroke-width="1.1"/><path d="M355.3 340.3H443Q447 343 447 350.85Q447 358.7 443 361.4H355.3Q351.2 358.7 351.2 350.85Q351.2 343 355.3 340.3Z" fill="#fff" stroke="#1e1e1e" stroke-width="1.2"/><path d="M368 337V364.8M430.8 337V364.8" stroke="#1e1e1e" stroke-width="1.9"/><path d="M361.1 340.3V337.4M358.5 337.4H363.7M376 340.3V337.4M373.4 337.4H378.6M361.1 361.4V364.8M358.5 364.8H363.7M422.7 361.4V364.8M420.1 364.8H425.3" stroke="#1e1e1e" stroke-width="1.1"/><circle cx="538" cy="354.8" r="11.7" fill="#fff" stroke="#1e1e1e" stroke-width="1.2"/><path d="M526.4 354.4H529.6L535.3 348.4L541.4 360.4L546.3 354.6H549.7" fill="none" stroke="#1e1e1e" stroke-width="1.1"/><path d="M556.8 333.1L524.6 372.8" stroke="#1e1e1e" stroke-width="1.1"/><path d="M522.2 375.7L523.2 369.4L527.6 373Z" fill="#1e1e1e"/><circle cx="691" cy="517.8" r="11.8" fill="#fff" stroke="#1e1e1e" stroke-width="1.1"/><rect x="527.5" y="438.4" width="22.200000000000045" height="36.900000000000034" rx="1" fill="#fff" stroke="#1e1e1e" stroke-width="1.3"/><rect x="522.3" y="440.0" width="5.2000000000000455" height="4.8" fill="#fff" stroke="#1e1e1e" stroke-width="1.1"/><rect x="521.9" y="439.09999999999997" width="2.2" height="6.6" rx="0.9" fill="#222" stroke="#1e1e1e" stroke-width="1.1"/><rect x="549.7" y="440.0" width="6.0" height="4.8" fill="#fff" stroke="#1e1e1e" stroke-width="1.1"/><rect x="553.7" y="439.09999999999997" width="2.2" height="6.6" rx="0.9" fill="#fff" stroke="#1e1e1e" stroke-width="1.1"/><rect x="522.3" y="468.6" width="5.2000000000000455" height="4.8" fill="#fff" stroke="#1e1e1e" stroke-width="1.1"/><rect x="521.9" y="467.7" width="2.2" height="6.6" rx="0.9" fill="#222" stroke="#1e1e1e" stroke-width="1.1"/><rect x="549.7" y="468.6" width="6.0" height="4.8" fill="#fff" stroke="#1e1e1e" stroke-width="1.1"/><rect x="553.7" y="467.7" width="2.2" height="6.6" rx="0.9" fill="#fff" stroke="#1e1e1e" stroke-width="1.1"/><path d="M527.5 471.00H529.50Q530.50 471.00 530.50 470.00V445.50A1.70 1.70 0 0 1 533.90 445.50V470.45A1.15 1.15 0 0 0 536.20 470.45V445.50A1.70 1.70 0 0 1 539.60 445.50V470.45A1.15 1.15 0 0 0 541.90 470.45V445.50A1.70 1.70 0 0 1 545.30 445.50V470.60A1.00 1.00 0 0 0 547.30 470.60V461.60M527.5 442.40H545.30Q546.90 442.40 546.90 444.00V454.20" fill="none" stroke="#1e1e1e" stroke-width="1"/><rect x="523.5" y="506.3" width="31.100000000000023" height="52.19999999999999" rx="1" fill="#fff" stroke="#1e1e1e" stroke-width="1.3"/><rect x="515.3" y="509.9" width="8.200000000000045" height="4.8" fill="#fff" stroke="#1e1e1e" stroke-width="1.1"/><rect x="514.9" y="508.99999999999994" width="2.2" height="6.6" rx="0.9" fill="#fff" stroke="#1e1e1e" stroke-width="1.1"/><rect x="554.6" y="509.9" width="8.0" height="4.8" fill="#fff" stroke="#1e1e1e" stroke-width="1.1"/><rect x="560.6" y="508.99999999999994" width="2.2" height="6.6" rx="0.9" fill="#fff" stroke="#1e1e1e" stroke-width="1.1"/><rect x="515.3" y="550.5" width="8.200000000000045" height="4.8" fill="#fff" stroke="#1e1e1e" stroke-width="1.1"/><rect x="514.9" y="549.6" width="2.2" height="6.6" rx="0.9" fill="#fff" stroke="#1e1e1e" stroke-width="1.1"/><rect x="554.6" y="550.5" width="8.0" height="4.8" fill="#fff" stroke="#1e1e1e" stroke-width="1.1"/><rect x="560.6" y="549.6" width="2.2" height="6.6" rx="0.9" fill="#fff" stroke="#1e1e1e" stroke-width="1.1"/><path d="M523.5 552.90H526.50Q527.50 552.90 527.50 551.90V517.20A1.90 1.90 0 0 1 531.30 517.20V551.65A2.05 2.05 0 0 0 535.40 551.65V517.20A1.90 1.90 0 0 1 539.20 517.20V551.65A2.05 2.05 0 0 0 543.30 551.65V517.20A1.90 1.90 0 0 1 547.10 517.20V551.80A1.90 1.90 0 0 0 550.90 551.80V538.20M523.5 512.30H547.70Q549.30 512.30 549.30 513.90V529.60" fill="none" stroke="#1e1e1e" stroke-width="1"/><path d="M220 479.5H223M226 479.5H229M224.5 475V478M224.5 481V484" stroke="#3f6d9e" stroke-width="1.1"/><circle cx="224.5" cy="479.5" r="1.5" fill="none" stroke="#3f6d9e" stroke-width="1.1"/></svg>
</body></html>
